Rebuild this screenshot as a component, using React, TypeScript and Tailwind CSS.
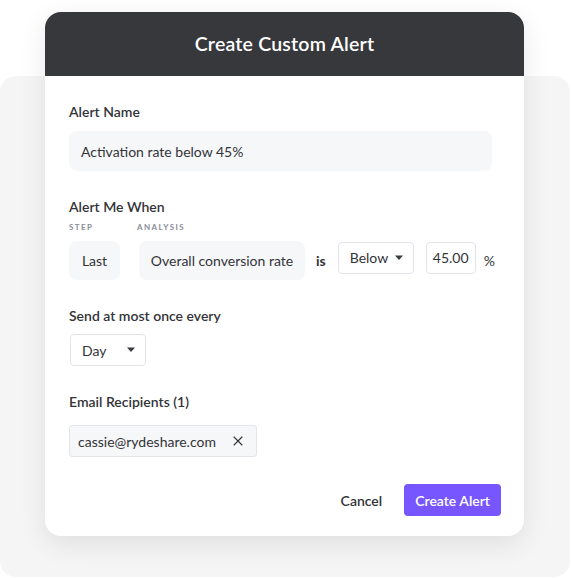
import { X } from 'lucide-react';

function Caret() {
    return (
        <svg width="10" height="6" viewBox="0 0 10 6" className="text-[#3a3b40]">
            <path d="M1 0.5h8L5 5z" fill="currentColor" />
        </svg>
    );
}

function Select({ label, width }: { label: string; width: string }) {
    return (
        <div
            className={`flex items-center justify-between h-[32px] ${width} pl-[11px] pr-[9px] bg-white border border-[#e3e3ea] rounded-[4px] text-[14px] text-[#333438]`}
        >
            <span>{label}</span>
            <Caret />
        </div>
    );
}

export default function App() {
    return (
        <div
            className="relative w-[571px] h-[578px] bg-white overflow-hidden"
            style={{ fontFamily: 'Lato, "Noto Sans", sans-serif' }}
        >
            <div className="absolute left-0 right-[1px] top-[76px] bottom-[1px] bg-[#f5f5f6] rounded-[16px]" />

            <div className="relative ml-[45px] mt-[12px] w-[479px] bg-white rounded-[16px] shadow-[0_8px_28px_rgba(0,0,0,0.09)] overflow-hidden">
                <div className="h-[64px] bg-[#37383c] flex items-center justify-center">
                    <h2 className="text-white text-[19.5px] font-semibold tracking-[0.2px]">
                        Create Custom Alert
                    </h2>
                </div>

                <div className="pl-[24px] pr-[32px] pt-[27px] pb-[20px] text-[#333438]">
                    <h4 className="text-[14px] font-semibold leading-[18px]">Alert Name</h4>
                    <div className="mt-[10px] h-[40px] bg-[#f6f7f9] rounded-[8px] flex items-center px-[12px] text-[14px]">
                        Activation rate below 45%
                    </div>

                    <h4 className="mt-[27px] text-[14px] font-semibold leading-[18px]">Alert Me When</h4>
                    <div className="mt-[5px] flex text-[8px] tracking-[1.4px] font-bold text-[#8a8c99] leading-[12px]">
                        <span className="w-[68px]">STEP</span>
                        <span>ANALYSIS</span>
                    </div>
                    <div className="mt-[8px] flex items-center text-[14px] -mr-[20px]">
                        <div className="shrink-0 h-[39px] w-[51px] bg-[#f6f7f9] rounded-[8px] flex items-center justify-center">
                            Last
                        </div>
                        <div className="shrink-0 ml-[19px] h-[39px] w-[166px] bg-[#f6f7f9] rounded-[8px] flex items-center justify-center">
                            Overall conversion rate
                        </div>
                        <span className="shrink-0 ml-[11px] font-bold">is</span>
                        <div className="shrink-0 ml-[12px] -mt-[6px]">
                            <Select label="Below" width="w-[76px]" />
                        </div>
                        <div className="shrink-0 ml-[12px] -mt-[6px] h-[32px] w-[50px] border border-[#e3e3ea] rounded-[4px] flex items-center justify-center">
                            45.00
                        </div>
                        <span className="shrink-0 ml-[8px]">%</span>
                    </div>

                    <h4 className="mt-[27px] text-[14px] font-semibold leading-[18px]">
                        Send at most once every
                    </h4>
                    <div className="mt-[9px] ml-[1px]">
                        <Select label="Day" width="w-[76px]" />
                    </div>

                    <h4 className="mt-[27px] text-[14px] font-semibold leading-[18px]">
                        Email Recipients (1)
                    </h4>
                    <div className="mt-[14px] inline-flex items-center h-[32px] pl-[8px] pr-[10px] bg-[#f6f7f9] border border-[#e3e5ea] rounded-[3px] text-[14px]">
                        <span>cassie@rydeshare.com</span>
                        <X className="ml-[14px] w-[16px] h-[16px]" strokeWidth={1.6} />
                    </div>

                    <div className="mt-[27px] flex items-center justify-end gap-[22px] -mr-[9px]">
                        <button className="text-[14px] font-semibold text-[#333438]">Cancel</button>
                        <button className="h-[32px] px-[11px] bg-[#7856ff] text-white text-[14px] font-semibold rounded-[4px]">
                            Create Alert
                        </button>
                    </div>
                </div>
            </div>
        </div>
    );
}
